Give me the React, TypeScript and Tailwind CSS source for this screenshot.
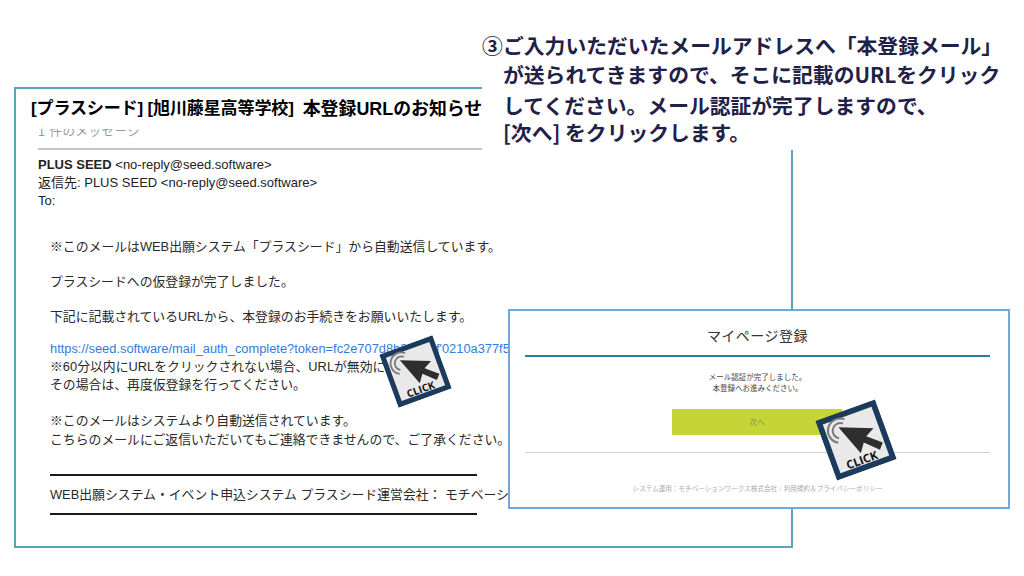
const jp = "font-['Liberation_Sans','Noto_Sans_CJK_JP',sans-serif]";

function ClickBadge({ className }: { className: string }) {
  return (
    <svg viewBox="0 0 100 100" className={`absolute rotate-[-20deg] ${className}`}>
      <rect x="5" y="5" width="90" height="90" fill="#e9e9e9" stroke="#1b3a5c" strokeWidth="9" />
      <g fill="none" stroke="#7a7a7a" strokeWidth="3.2">
        <path d="M44 13.4 A19 19 0 1 0 22.5 44.5" />
        <path d="M39.7 18.8 A12 12 0 1 0 26 38.4" />
      </g>
      <path d="M31 22 L82 42 L67 50 L88 68 L80 77 L60 58 L50 72 Z" fill="#2e2e2e" />
      <text x="48" y="89" textAnchor="middle" fontSize="18" fontWeight="700" fill="#111" fontFamily="'Open Sans', sans-serif">CLICK</text>
    </svg>
  );
}

const Line = ({ children, className = "" }: { children: React.ReactNode; className?: string }) => (
  <p className={`h-[18px] leading-[18px] whitespace-nowrap ${className}`}>{children}</p>
);

export default function App() {
  return (
    <div className={`relative w-[1024px] h-[576px] overflow-hidden bg-white ${jp}`}>
      {/* Mail window */}
      <section className="absolute left-[14px] top-[87px] w-[779px] h-[461px] border-2 border-[#5aa3bb] overflow-hidden">
        <h2 className="ml-[15px] mt-[8px] h-[24px] flex items-center whitespace-nowrap font-bold text-black">
          <span className="text-[17.1px] tracking-[-0.2px]">[プラスシード] [旭川藤星高等学校]</span>
          <span className="ml-[9px] text-[17.9px] font-semibold">本登録URLのお知らせ</span>
        </h2>
        <div className="ml-[22px] mt-[8px] h-[10px] overflow-hidden">
          <p className="mt-[-4px] h-[14px] leading-[14px] text-[12.5px] text-[#9a9a9a] tracking-[0.5px]">1 件のメッセージ</p>
        </div>
        <div className="ml-[22px] mt-[9px] w-[444px] h-[2px] bg-[#c4c4c4]"></div>
        <div className="ml-[22px] mt-[6px] text-[13px] text-[#222]">
          <Line><b>PLUS SEED</b> &lt;no-reply@seed.software&gt;</Line>
          <Line>返信先: PLUS SEED &lt;no-reply@seed.software&gt;</Line>
          <Line>To:</Line>
        </div>
        <div className="ml-[34px] mt-[28px] text-[12.85px] text-[#2a2a2a]">
          <Line>※このメールはWEB出願システム「プラスシード」から自動送信しています。</Line>
          <Line className="mt-[17px]">プラスシードへの仮登録が完了しました。</Line>
          <Line className="mt-[17px]">下記に記載されているURLから、本登録のお手続きをお願いいたします。</Line>
          <Line className="mt-[14px] text-[#2f7de0]">https://seed.software/mail_auth_complete?token=fc2e707d8b3e9a4f'0210a377f5</Line>
          <Line>※60分以内にURLをクリックされない場合、URLが無効になります。</Line>
          <Line>その場合は、再度仮登録を行ってください。</Line>
          <Line className="mt-[18px]">※このメールはシステムより自動送信されています。</Line>
          <Line className="mt-[1px]">こちらのメールにご返信いただいてもご連絡できませんので、ご了承ください。</Line>
          <div className="mt-[25px] w-[427px] h-[2px] bg-[#1a1a1a]"></div>
          <Line className="mt-[10px]">WEB出願システム・イベント申込システム プラスシード運営会社： モチベーションワークス株式会社</Line>
          <div className="mt-[9px] w-[427px] h-[2px] bg-[#1a1a1a]"></div>
        </div>
      </section>

      <ClickBadge className="left-[387px] top-[343px] w-[57px] h-[57px]" />

      {/* Instruction */}
      <div className="absolute left-[482px] top-[28px] w-[528px] h-[122px] bg-white pt-[3px] text-[20.8px] font-bold text-[#1f2147] font-['Noto_Sans_CJK_JP',sans-serif]">
        <div className="flex h-[29px] leading-[29px] whitespace-nowrap"><span className="w-[21px]">③</span><span>ご入力いただいたメールアドレスへ「本登録メール」</span></div>
        <p className="ml-[21px] h-[29px] leading-[29px] whitespace-nowrap">が送られてきますので、そこに記載のURLをクリック</p>
        <p className="ml-[21px] mt-[2px] h-[29px] leading-[29px] whitespace-nowrap">してください。メール認証が完了しますので、</p>
        <p className="ml-[21px] mt-[-2px] h-[29px] leading-[29px] whitespace-nowrap">[次へ] をクリックします。</p>
      </div>

      {/* My page window */}
      <section className="absolute left-[508px] top-[309px] w-[502px] h-[200px] bg-white border-2 border-[#6fa8dc] pl-[15px] pr-[18px] font-['Noto_Sans_CJK_JP',sans-serif]">
        <h3 className="mt-[14px] h-[20px] leading-[20px] text-center text-[14px] tracking-[0.5px] text-[#333]">マイページ登録</h3>
        <div className="mt-[10px] h-[2px] bg-[#2c7da6]"></div>
        <div className="mt-[14px] text-center text-[7.5px] leading-[11px] text-[#444]">
          <p>メール認証が完了しました。</p>
          <p>本登録へお進みください。</p>
        </div>
        <div className="ml-[147px] mt-[16px] w-[170px] h-[26px] bg-[#c5d537] flex items-center justify-center text-[7.5px] text-[#8a8f55]">次へ</div>
        <div className="mt-[17px] h-px bg-[#d4d4d4]"></div>
        <p className="mt-[30px] text-center text-[6.6px] leading-[10px] text-[#aaa]">システム運用：モチベーションワークス株式会社｜利用規約＆プライバシーポリシー</p>
      </section>

      <ClickBadge className="left-[824px] top-[408px] w-[64px] h-[64px]" />
    </div>
  );
}
